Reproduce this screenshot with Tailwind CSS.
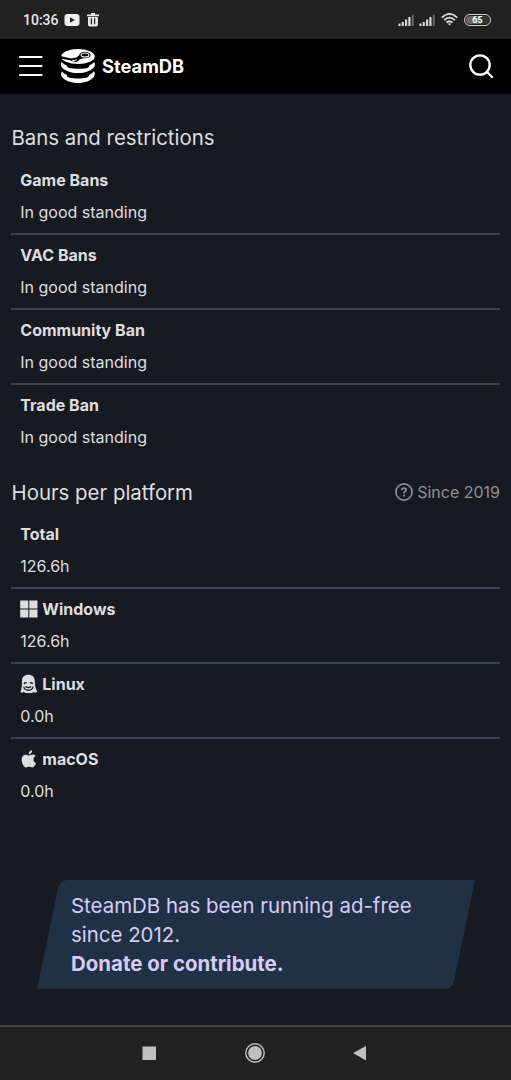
<!DOCTYPE html>
<html lang="en">
<head>
<meta charset="utf-8">
<title>SteamDB</title>
<script src="https://cdn.jsdelivr.net/npm/@tailwindcss/browser@4"></script>
</head>
<body class="w-[511px] h-[1080px] overflow-hidden bg-[#171a21] text-[#dedee0] font-['Inter',sans-serif] text-[16px] flex flex-col">
<div class="h-[39px] shrink-0 bg-[#212121] flex items-center pl-[23px] pr-[20px] text-[#e6e6e6] font-['Roboto',sans-serif]">
  <span class="text-[14px] font-medium leading-none w-[41px] whitespace-nowrap">10:36</span>
  <svg class="w-[16px] h-[12px]" viewBox="0 0 15 12"><rect width="15" height="12" rx="3" fill="#eee"/><path d="M5.5 3.3L10.3 6L5.5 8.7Z" fill="#212121"/></svg>
  <svg class="w-[12px] h-[14px] ml-[7px]" viewBox="0 0 12 14"><path d="M4 0H8V1.5H12V3.2H0V1.5H4ZM1 4H11V11.5Q11 13.5 9 13.5H3Q1 13.5 1 11.5Z" fill="#e6e6e6"/><path d="M4.4 5.3V11.3M7.6 5.3V11.3" stroke="#212121" stroke-width="1.2"/></svg>
  <div class="ml-auto flex items-center">
    <svg class="w-[16px] h-[12px]" viewBox="0 0 16 12"><path d="M1.5 9.5V12M4.8 8V12M8.1 5.5V12M11.4 3V12" stroke="#d8d8d8" stroke-width="2.2"/><path d="M14.7 .5V12" stroke="#666" stroke-width="2"/></svg>
    <svg class="w-[16px] h-[12px] ml-[5px]" viewBox="0 0 16 12"><path d="M1.5 9.5V12M4.8 8V12M8.1 5.5V12M11.4 3V12" stroke="#d8d8d8" stroke-width="2.2"/><path d="M14.7 .5V12" stroke="#666" stroke-width="2"/></svg>
    <svg class="w-[17px] h-[13px] ml-[6px]" viewBox="0 0 17 13" fill="none" stroke="#ddd" stroke-width="1.8"><path d="M.8 4.6Q8.5 -2.8 16.2 4.6M3.2 7.2Q8.5 2 13.8 7.2M5.6 9.7Q8.5 6.8 11.4 9.7"/><path d="M8.5 12.6L6.8 10.8Q8.5 9.5 10.2 10.8Z" fill="#ddd" stroke="none"/></svg>
    <div class="ml-[6px] w-[27px] h-[12px] rounded-full border border-[#d0d0d0] bg-[#212121] p-px"><div class="h-full w-full rounded-full bg-linear-to-r from-[#666] from-65% to-[#333] to-65% text-[9px] font-bold leading-[8.5px] text-center text-white">65</div></div>
  </div>
</div>
<div class="h-[55px] shrink-0 bg-black flex items-center pl-[18.5px] pr-[17px] pb-[1.5px] text-white">
  <svg class="w-[24px] h-[22px]" viewBox="0 0 24 22" stroke="#fff" stroke-width="2.2" stroke-linecap="round"><path d="M1 2H22.5M1 11H22.5M1 20H22.5"/></svg>
  <svg class="w-[36px] h-[36px] ml-[17.5px]" viewBox="0 0 36 36" fill="#fff">
    <ellipse cx="18" cy="8.500" rx="16.800" ry="7.500"/>
    <path d="M0 8L11.500 10.400L16.500 9.600L20 6.500L26 9.600L19.300 11.400C18.500 14 13.500 14.500 11 12.600L0 10.600Z" fill="#000"/>
    <ellipse cx="25" cy="7" rx="5.600" ry="3.300" fill="#000"/>
    <ellipse cx="25" cy="7" rx="3.900" ry="2" fill="#000" stroke="#fff" stroke-width="1.100"/>
    <path d="M12 12.300Q14.500 13.300 17 11.500" fill="none" stroke="#fff" stroke-width=".9"/>
    <path d="M1.600 14C.5 16 .8 18 2 19.500C5 23 11 25 18 25C25 25 31 23 33.800 19.500C35.100 17.800 35.400 15.800 34.200 14C33 15.400 31.300 16.500 29.200 17.400C30 20 24.500 20.700 18 20.700C11.500 20.700 6 20 6.800 17.500C4.500 16.700 2.800 15.600 1.600 14Z"/>
    <path d="M2 23.500C.8 25 .8 27.500 2 29C5 32.800 11 35 18 35C25 35 31 32.800 33.800 29C35.200 27.200 35.200 24.800 34 23.200C32.800 24.800 31 26 29 26.900C29.700 29.600 24.500 30.400 18 30.400C11.500 30.400 6.200 29.600 7 26.900C4.900 26 3.200 24.900 2 23.500Z"/>
  </svg>
  <span class="ml-[6px] text-[18.3px] font-bold leading-none">SteamDB</span>
  <svg class="w-[26px] h-[26px] ml-auto" viewBox="0 0 26 26" fill="none" stroke="#fff" stroke-width="2.3" stroke-linecap="round"><circle cx="12" cy="12" r="9.7"/><path d="M19 19L24 24"/></svg>
</div>
<main class="flex-1 px-[11px] pt-[28px]">
  <h2 class="text-[20.4px] leading-[32px] pl-[0.5px]">Bans and restrictions</h2>
  <div class="mt-[6px] leading-[32px] [&>div]:h-[74.9px] [&>div]:pt-[4px] [&>div]:px-[9.3px] [&>div:not(:last-child)]:border-b-2 [&>div]:border-[#364459] [&_b]:font-[680] [&_b]:block">
    <div><b>Game Bans</b>In good standing</div>
    <div><b>VAC Bans</b>In good standing</div>
    <div><b>Community Ban</b>In good standing</div>
    <div><b>Trade Ban</b>In good standing</div>
  </div>
  <div class="mt-[16.6px] flex items-center justify-between leading-[32px]">
    <h2 class="text-[20.4px] pl-[0.5px] pt-px -mb-px">Hours per platform</h2>
    <span class="flex items-center gap-[4.5px] text-[#8f8f96]"><svg class="w-[18px] h-[18px]" viewBox="0 0 18 18" fill="none" stroke="currentColor" stroke-width="1.7"><circle cx="9" cy="9" r="8.1"/><path d="M6.8 7Q7 5.2 9 5.2Q11.2 5.2 11.2 7Q11.2 8.2 9.9 8.8Q9 9.3 9 10.4"/><path d="M9 11.7V13.4" stroke-width="1.8"/></svg>Since 2019</span>
  </div>
  <div class="mt-[6px] leading-[32px] [&>div]:h-[74.9px] [&>div]:pt-[4px] [&>div]:px-[9.3px] [&>div:not(:last-child)]:border-b-2 [&>div]:border-[#364459] [&_b]:font-[680] [&_b]:flex [&_b]:items-center [&_b]:gap-[4px]">
    <div><b>Total</b>126.6h</div>
    <div><b><svg class="w-[18px] h-[18px]" viewBox="0 0 18 18" fill="#dedee0"><path d="M.2 .5H8.300V8.500H.2ZM9.300 .5H17.500V8.500H9.300ZM.2 9.500H8.300V17.500H.2ZM9.300 9.500H17.500V17.500H9.300Z"/></svg>Windows</b>126.6h</div>
    <div><b><svg class="w-[18px] h-[20px]" viewBox="0 0 18 20"><path d="M2 7C2 3 4.600 .8 8.300 .8C12.300 .8 14.800 3 14.800 7C14.800 11.500 15.300 14.500 17.300 17.800L15.500 18.700L13.500 18L12 19H5.500L3.800 17.800L2.500 18.800L.3 18C1.800 15 2 11 2 7Z" fill="#dedee0"/><path d="M4.200 10.200Q4.600 7.600 6.700 9.200M9.800 9.200Q12 7.600 12.500 10.200M3.800 12.500C4.500 17.500 12.500 17.500 13 12.500M5.500 12.400Q8.300 14.800 11.200 12.400" fill="none" stroke="#171a21" stroke-width="1.300"/></svg>Linux</b>0.0h</div>
    <div><b><svg class="w-[18px] h-[18px]" viewBox="0 0 18 18" fill="#dedee0"><path d="M15.700 6.100C14.100 7 13.500 8.100 13.500 9.400C13.500 11 14.500 12.300 16 12.900C15.200 15.100 13.600 17.500 12 17.500C10.900 17.500 10.500 16.800 9.100 16.800C7.700 16.800 7.200 17.500 6.200 17.500C4 17.500 1.600 13.300 1.600 9.800C1.600 6.500 3.600 4.700 5.700 4.700C7.100 4.700 8.200 5.600 9 5.600C9.800 5.600 11.100 4.600 12.700 4.600C13.800 4.600 14.900 5.100 15.700 6.100ZM12 .3C12.200 2.500 10.500 4.300 8.700 4.200C8.500 2.200 10.200 .4 12 .3Z"/></svg>macOS</b>0.0h</div>
  </div>
</main>
<div class="h-[211px] shrink-0 pt-[66px] pl-[37px]">
  <div class="w-[438px] h-[109px] relative">
    <svg class="absolute inset-0 w-[438px] h-[109px]" viewBox="0 0 438 109" fill="#213145"><path d="M0 109L21 8Q23.500 0 31 0H438L417 101Q415 109 408 109Z"/></svg>
    <div class="relative pl-[34px] pt-[11px] text-[20.45px] leading-[29px] text-[#d6ccf5]">SteamDB has been running ad-free<br>since 2012.<br><b class="font-bold">Donate or contribute.</b></div>
  </div>
</div>
<div class="h-[55px] shrink-0 bg-[#212121] border-t-2 border-[#424242]">
  <svg class="w-[511px] h-[53px]" viewBox="0 0 511 53" fill="#c0c0c0"><rect x="142.500" y="19.500" width="13.500" height="13.500"/><circle cx="255" cy="26" r="6.900"/><circle cx="255" cy="26" r="9.200" fill="none" stroke="#c0c0c0" stroke-width="1.400"/><path d="M353 26L366 19V33.500Z"/></svg>
</div>
</body>
</html>
